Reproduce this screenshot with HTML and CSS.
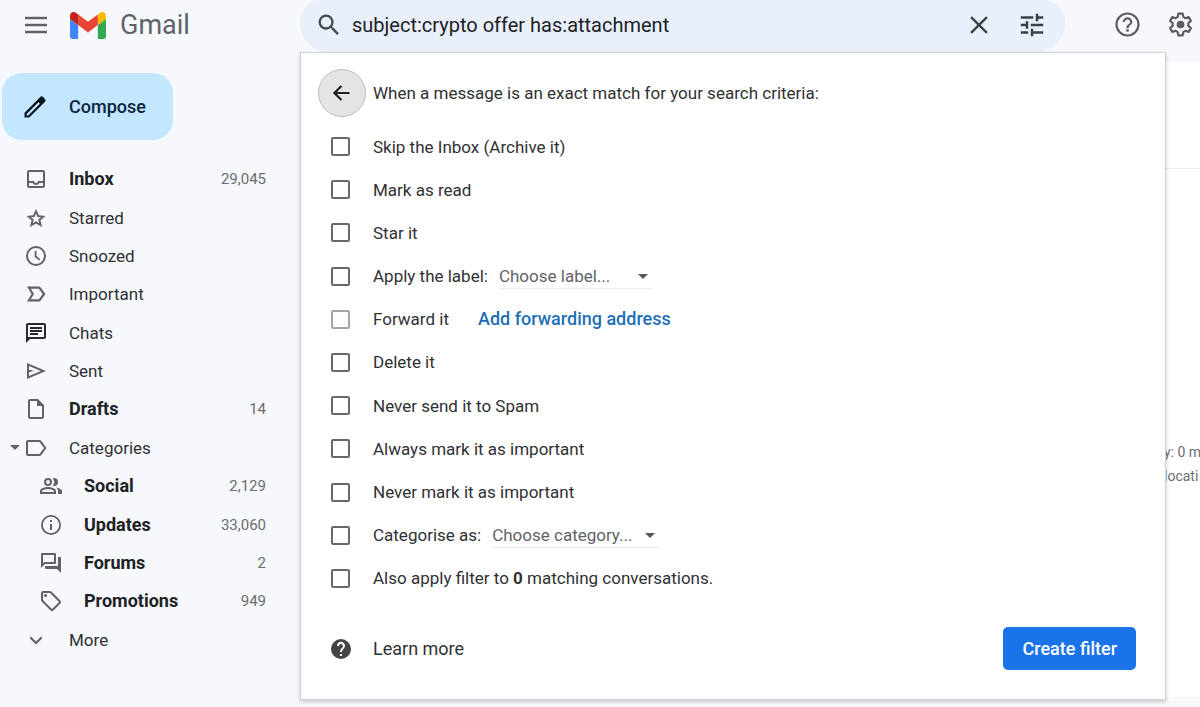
FILE: index.html
```html
<!DOCTYPE html>
<html lang="en-GB">
<head>
<meta charset="utf-8">
<meta name="viewport" content="width=device-width, initial-scale=1">
<title>Gmail</title>
<link rel="stylesheet" href="styles.css">
</head>
<body>
<div class="app">
  <aside class="sidebar">
    <div class="brand">
      <button class="icon-button menu-button" type="button" aria-label="Main menu">
        <svg width="24" height="24" viewBox="0 0 24 24" stroke="#5f6368" stroke-width="2.400"><path d="M1 5h22M1 12h22M1 19h22"/></svg>
      </button>
      <a class="logo" href="#">
        <svg width="36" height="27" viewBox="52 42 88 66" aria-hidden="true">
          <path fill="#4285f4" d="M58 108h14V74L52 59v43c0 3.320 2.690 6 6 6"/>
          <path fill="#34a853" d="M120 108h14c3.320 0 6-2.690 6-6V59l-20 15"/>
          <path fill="#fbbc04" d="M120 48v26l20-15v-8c0-7.420-8.470-11.650-14.400-7.200"/>
          <path fill="#ea4335" d="M72 74V48l24 18 24-18v26L96 92"/>
          <path fill="#c5221f" d="M52 51v8l20 15V48l-5.600-4.200c-5.940-4.450-14.400-.22-14.400 7.200"/>
        </svg>
        <span>Gmail</span>
      </a>
    </div>
    <button class="compose" type="button">
      <svg width="28" height="28" viewBox="0 0 24 24" fill="#0b1420"><path fill-rule="evenodd" d="M20.400 4.850l-1.250-1.250a2 2 0 0 0-2.850 0L3 16.900V21h4.100L20.400 7.700a2 2 0 0 0 0-2.850zM6.200 19.200H4.900v-1.300L14.900 7.900l1.300 1.300z"/></svg>
      <span>Compose</span>
    </button>
    <nav>
      <ul class="folders">
        <li><a class="folder unread" href="#">
          <svg class="glyph" viewBox="0 0 24 24"><path d="M19 3H5a2 2 0 0 0-2 2v14c0 1.100.9 2 2 2h14a2 2 0 0 0 2-2V5a2 2 0 0 0-2-2zm0 16H5v-3h3.560c.69 1.190 1.970 2 3.450 2s2.750-.81 3.450-2H19zm0-5h-4.990c0 1.100-.9 2-2 2s-2-.9-2-2H5V5h14z"/></svg>
          <span class="name">Inbox</span><span class="count">29,045</span></a></li>
        <li><a class="folder" href="#">
          <svg class="glyph" viewBox="0 0 24 24"><path fill-rule="evenodd" d="M21.500 9.900l-6.600-.6L12 3 9.100 9.300l-6.600.6 5 4.400L6 21l6-3.500 6 3.500-1.500-6.700zM12 15.300l-3.200 1.900.9-3.600-2.700-2.400 3.500-.3L12 7.600l1.500 3.300 3.500.3-2.700 2.400.9 3.600z"/></svg>
          <span class="name">Starred</span></a></li>
        <li><a class="folder" href="#">
          <svg class="glyph" viewBox="0 0 24 24"><path d="M12 2a10 10 0 1 0 0 20 10 10 0 0 0 0-20zm0 18a8 8 0 1 1 0-16 8 8 0 0 1 0 16zm.5-13H10.700v6l4.500 3.600 1.100-1.400-3.800-3.100z"/></svg>
          <span class="name">Snoozed</span></a></li>
        <li><a class="folder" href="#">
          <svg class="glyph" viewBox="0 0 24 24"><path d="M3 4.500L7.500 12 3 19.500h12a2 2 0 0 0 1.660-.89L21.500 12l-4.840-6.610A2 2 0 0 0 15 4.500zm3.800 2.200h8l3.900 5.300-3.900 5.300h-8l3.200-5.300z"/></svg>
          <span class="name">Important</span></a></li>
        <li><a class="folder" href="#">
          <svg class="glyph dark" viewBox="0 0 24 24"><path d="M4 2h16a2 2 0 0 1 2 2v12a2 2 0 0 1-2 2H6l-4 4V4c0-1.100.9-2 2-2zm0 2v12h16V4zm2 8h8v2H6zm0-3h12v2H6zm0-3h12v2H6z" fill-rule="evenodd"/></svg>
          <span class="name">Chats</span></a></li>
        <li><a class="folder" href="#">
          <svg class="glyph" viewBox="0 0 24 24"><path fill-rule="evenodd" d="M3 4l19 8-19 8zm2 3v3.750L10 12l-5 1.250V17l11.850-5z"/></svg>
          <span class="name">Sent</span></a></li>
        <li><a class="folder unread" href="#">
          <svg class="glyph" viewBox="0 0 24 24"><path fill-rule="evenodd" d="M14 2H6a2 2 0 0 0-2 2v16c0 1.100.9 2 2 2h12a2 2 0 0 0 2-2V8zM6 20V4h7v5h5v11z"/></svg>
          <span class="name">Drafts</span><span class="count">14</span></a></li>
        <li><a class="folder expandable" href="#">
          <svg class="twisty" viewBox="0 0 10 6"><path d="M0 0h10L5 5z"/></svg>
          <svg class="glyph" viewBox="0 0 24 24"><path fill-rule="evenodd" d="M4 4h11.500c.67 0 1.270.33 1.630.84L22.500 12l-5.370 7.160c-.36.51-.96.84-1.630.84H4a2 2 0 0 1-2-2V6c0-1.100.9-2 2-2zm0 2v12h11.500l4.500-6-4.500-6z"/></svg>
          <span class="name">Categories</span></a></li>
        <li><a class="folder child unread" href="#">
          <svg class="glyph" viewBox="0 0 24 24"><path fill-rule="evenodd" d="M9 4a4 4 0 1 0 0 8 4 4 0 0 0 0-8zm0 2a2 2 0 1 1 0 4 2 2 0 0 1 0-4zM9 13c-2.700 0-8 1.340-8 4v3h16v-3c0-2.660-5.300-4-8-4zm6 5H3v-1c0-.7 3.200-2 6-2s6 1.300 6 2zM15 12a4 4 0 0 0 0-8c-.5 0-.9.100-1.300.200a6 6 0 0 1 0 7.600c.4.130.8.200 1.300.200zM17 13.400c1.200.9 2 2 2 3.600v3h4v-3c0-2-3.500-3.200-6-3.600z"/></svg>
          <span class="name">Social</span><span class="count">2,129</span></a></li>
        <li><a class="folder child unread" href="#">
          <svg class="glyph" viewBox="0 0 24 24"><path fill-rule="evenodd" d="M11 7h2v2h-2zm0 4h2v6h-2zM12 2a10 10 0 1 0 0 20 10 10 0 0 0 0-20zm0 1.800a8.200 8.200 0 1 1 0 16.400 8.200 8.200 0 0 1 0-16.400z"/></svg>
          <span class="name">Updates</span><span class="count">33,060</span></a></li>
        <li><a class="folder child unread" href="#">
          <svg class="glyph" viewBox="0 0 24 24"><path fill-rule="evenodd" d="M15 4v7H5.170L4 12.170V4zm1-2H3a1 1 0 0 0-1 1v14l4-4h10a1 1 0 0 0 1-1V3a1 1 0 0 0-1-1zm5 4h-2v9H6v2a1 1 0 0 0 1 1h11l4 4V7a1 1 0 0 0-1-1z"/></svg>
          <span class="name">Forums</span><span class="count">2</span></a></li>
        <li><a class="folder child unread" href="#">
          <svg class="glyph" viewBox="0 0 24 24"><path fill-rule="evenodd" d="M21.400 11.600l-9-9A2 2 0 0 0 11 2H4a2 2 0 0 0-2 2v7c0 .550.220 1.050.590 1.420l9 9a2 2 0 0 0 2.820 0l7-7a2 2 0 0 0 0-2.820zM13 20L4 11V4h7l9 9zM6.500 5a1.500 1.500 0 1 0 0 3 1.500 1.500 0 0 0 0-3z"/></svg>
          <span class="name">Promotions</span><span class="count">949</span></a></li>
        <li><a class="folder" href="#">
          <svg class="glyph" viewBox="0 0 24 24"><path d="M7 8.500l5 5 5-5 1.500 1.500-6.500 6.500L5.500 10z"/></svg>
          <span class="name">More</span></a></li>
      </ul>
    </nav>
  </aside>

  <main class="main">
    <header class="topbar">
      <form class="search" role="search">
        <button class="icon-button" type="button" aria-label="Search">
          <svg width="28" height="28" viewBox="0 0 24 24" fill="#444a50"><path d="M15.500 14h-.79l-.28-.27A6.470 6.470 0 0 0 16 9.500 6.500 6.500 0 1 0 9.500 16c1.610 0 3.090-.59 4.230-1.570l.27.28v.79l5 4.990L20.490 19zm-6 0a4.500 4.500 0 1 1 0-9 4.500 4.500 0 0 1 0 9z"/></svg>
        </button>
        <input class="query" type="text" aria-label="Search mail" value="subject:crypto offer has:attachment">
        <button class="icon-button" type="button" aria-label="Clear search">
          <svg width="28" height="28" viewBox="0 0 24 24" stroke="#3c4043" stroke-width="2"><path d="M5.200 5.200l13.600 13.600M18.800 5.200L5.200 18.800"/></svg>
        </button>
        <button class="icon-button" type="button" aria-label="Search options">
          <svg width="30" height="30" viewBox="0 0 24 24" fill="#3c4043"><path d="M3 17v2h6v-2zM3 5v2h10V5zm10 16v-2h8v-2h-8v-2h-2v6zM7 9v2H3v2h4v2h2V9zm14 4v-2H11v2zm-6-4h2V7h4V5h-4V3h-2z"/></svg>
        </button>
      </form>
      <div class="actions">
        <button class="icon-button" type="button" aria-label="Support">
          <svg width="29" height="29" viewBox="0 0 24 24" fill="#5a5d61"><path d="M11 18h2v-2h-2zm1-16a10 10 0 1 0 0 20 10 10 0 0 0 0-20zm0 18.200a8.200 8.200 0 1 1 0-16.400 8.200 8.200 0 0 1 0 16.400zM12 6a4 4 0 0 0-4 4h1.900a2.100 2.100 0 1 1 4.200 0c0 2-3.050 1.750-3.050 5h1.900c0-2.250 3.050-2.500 3.050-5a4 4 0 0 0-4-4z"/></svg>
        </button>
        <button class="icon-button" type="button" aria-label="Settings">
          <svg width="29" height="29" viewBox="0 0 24 24" fill="none" stroke="#5a5d61" stroke-width="1.800" stroke-linejoin="round"><path d="M10.200 3h3.600l.5 2.700 1.900 1.100 2.600-.9 1.800 3.100-2.100 1.800v2.400l2.100 1.800-1.800 3.100-2.600-.9-1.900 1.100-.5 2.700h-3.600l-.5-2.700-1.900-1.100-2.600.9L3.400 15l2.100-1.800v-2.400L3.400 9l1.800-3.100 2.600.9 1.900-1.100z"/><circle cx="12" cy="12" r="3.200" fill="#5a5d61" stroke="none"/></svg>
        </button>
      </div>
    </header>

    <section class="mailbox" aria-label="Messages">
      <div class="mailbox-toolbar"></div>
      <div class="activity"><p>y: 0 m</p><p>locati</p></div>
    </section>

    <form class="filter-panel">
      <div class="panel-head">
        <button class="back" type="button" aria-label="Back">
          <svg width="26" height="26" viewBox="0 0 24 24" fill="none" stroke="#202124" stroke-width="2"><path d="M19 12H5.500M11.500 5.500L5 12l6.500 6.500"/></svg>
        </button>
        <h2>When a message is an exact match for your search criteria:</h2>
      </div>
      <div class="options">
        <div class="option"><input type="checkbox" id="skip"><label for="skip">Skip the Inbox (Archive it)</label></div>
        <div class="option"><input type="checkbox" id="read"><label for="read">Mark as read</label></div>
        <div class="option"><input type="checkbox" id="star"><label for="star">Star it</label></div>
        <div class="option"><input type="checkbox" id="label"><label for="label">Apply the label:</label>
          <span class="picker picker-label"><select aria-label="Label"><option>Choose label...</option></select><svg class="arrow" viewBox="0 0 10 5"><path d="M0 0h10L5 5z"/></svg></span></div>
        <div class="option"><input type="checkbox" id="forward" disabled><label for="forward">Forward it</label><a class="forwarding" href="#">Add forwarding address</a></div>
        <div class="option"><input type="checkbox" id="delete"><label for="delete">Delete it</label></div>
        <div class="option"><input type="checkbox" id="spam"><label for="spam">Never send it to Spam</label></div>
        <div class="option"><input type="checkbox" id="always"><label for="always">Always mark it as important</label></div>
        <div class="option"><input type="checkbox" id="never"><label for="never">Never mark it as important</label></div>
        <div class="option"><input type="checkbox" id="category"><label for="category">Categorise as:</label>
          <span class="picker picker-category"><select aria-label="Category"><option>Choose category...</option></select><svg class="arrow" viewBox="0 0 10 5"><path d="M0 0h10L5 5z"/></svg></span></div>
        <div class="option"><input type="checkbox" id="also"><label for="also">Also apply filter to <b>0</b> matching conversations.</label></div>
      </div>
      <div class="panel-foot">
        <a class="learn" href="#">
          <svg width="24" height="24" viewBox="0 0 24 24" fill="#444"><path d="M12 2a10 10 0 1 0 0 20 10 10 0 0 0 0-20zm1 17h-2v-2h2zm2.070-7.750l-.9.920C13.450 12.900 13 13.500 13 15h-2v-.5c0-1.100.45-2.100 1.170-2.830l1.240-1.260A2 2 0 1 0 10 9H8a4 4 0 1 1 7.070 2.250z"/></svg>
          <span>Learn more</span>
        </a>
        <button class="create" type="button">Create filter</button>
      </div>
    </form>
  </main>
</div>
</body>
</html>
```
FILE: styles.css
```css
* { box-sizing: border-box; }

body {
  margin: 0;
  background: #f6f8fc;
  color: #303134;
  font-family: Roboto, "Liberation Sans", sans-serif;
  font-size: 17px;
  line-height: 24px;
}

button, input, select { font: inherit; color: inherit; }
button { cursor: pointer; }
a { color: inherit; text-decoration: none; }
svg { flex: none; display: block; }

.app {
  display: grid;
  grid-template-columns: 300px minmax(0, 1fr);
  min-height: 100vh;
}

.icon-button {
  display: flex;
  align-items: center;
  justify-content: center;
  padding: 0;
  border: 0;
  background: none;
}

/* Sidebar */
.brand {
  display: flex;
  align-items: center;
  gap: 22px;
  height: 50px;
  padding-left: 24px;
}
.logo {
  display: flex;
  align-items: center;
  gap: 14px;
  color: #5f6368;
  font-size: 27px;
}
.compose {
  display: flex;
  align-items: center;
  gap: 20px;
  height: 67px;
  margin: 23px 0 0 2px;
  padding: 0 27px 0 19px;
  border: 0;
  border-radius: 20px;
  background: #c2e7ff;
  color: #0b2440;
  font-size: 18px;
  font-weight: 500;
}
.folders {
  display: grid;
  grid-auto-rows: 1fr;
  min-height: 499px;
  margin: 20px 0 0;
  padding: 0;
  list-style: none;
}
.folder {
  display: flex;
  align-items: center;
  height: 100%;
  padding: 0 34px 0 24px;
}
.folder.child { padding-left: 39px; }
.folder.expandable { padding-left: 10px; }
.glyph {
  width: 24px;
  height: 24px;
  margin-right: 21px;
  fill: #5f6368;
}
.glyph.dark { fill: #27292c; }
.twisty {
  width: 10px;
  height: 6px;
  margin-right: 4px;
  fill: #5f6368;
}
.name { flex: 1; }
.unread .name { font-size: 18px; font-weight: 700; color: #202124; }
.count { font-size: 15px; color: #6a6d71; }

/* Top bar */
.main {
  position: relative;
  display: flex;
  flex-direction: column;
}
.topbar {
  display: grid;
  grid-template-columns: minmax(0, 1fr) 135px;
  align-items: start;
  height: 62px;
}
.search {
  display: flex;
  align-items: center;
  height: 52px;
  padding: 0 18px 3px 15px;
  border-radius: 22px 22px 28px 28px;
  background: #e9f0fb;
}
.query {
  flex: 1;
  min-width: 0;
  padding: 0;
  margin-left: 9px;
  border: 0;
  outline: 0;
  background: none;
  color: #202124;
  font-size: 20px;
}
.search .query + .icon-button { margin-right: 24px; }
.actions {
  display: flex;
  gap: 24px;
  height: 49px;
  padding-left: 48px;
}

/* Message area */
.mailbox {
  flex: 1;
  margin-bottom: 10px;
  background: #fff;
}
.mailbox-toolbar {
  height: 107px;
  border-bottom: 1px solid #eceff1;
}
.activity {
  width: 36px;
  margin: 271px 0 0 auto;
  color: #6a6d71;
  font-size: 14px;
  white-space: nowrap;
}
.activity p { margin: 0; }

/* Filter panel */
.filter-panel {
  position: absolute;
  top: 52px;
  left: 0;
  right: 34px;
  padding: 16px 29px 29px 17px;
  border: 1px solid #cfd1d4;
  background: #fff;
  box-shadow: 0 2px 4px rgba(0, 0, 0, .2);
}
.panel-head {
  display: flex;
  align-items: center;
  gap: 7px;
}
.panel-head h2 {
  margin: 0;
  font-size: inherit;
  font-weight: 400;
}
.back {
  display: flex;
  align-items: center;
  justify-content: center;
  width: 48px;
  height: 48px;
  padding: 0;
  border: 1px solid #bdbdbd;
  border-radius: 50%;
  background: #e4e4e4;
}
.options {
  display: grid;
  grid-auto-rows: 1fr;
  min-height: 475px;
  margin-top: 8px;
}
.option {
  display: flex;
  align-items: center;
  padding-left: 13px;
}
.option input {
  appearance: none;
  width: 19px;
  height: 19px;
  margin: 0 23px 0 0;
  border: 2px solid #66686b;
  border-radius: 2px;
}
.option input:disabled { border-color: #a5a6a8; }
.picker {
  position: relative;
  margin-left: 11px;
  border-bottom: 1px solid #ebebeb;
}
.picker select {
  display: block;
  width: 100%;
  padding: 0;
  border: 0;
  appearance: none;
  background: none;
  color: #5f6368;
}
.picker-label { width: 153px; }
.picker-category { width: 167px; }
.arrow {
  position: absolute;
  top: 10px;
  right: 4px;
  width: 10px;
  height: 5px;
  fill: #55575a;
  pointer-events: none;
}
.forwarding {
  margin-left: 29px;
  color: #1f6fb8;
  font-size: 18px;
  font-weight: 500;
}
.panel-foot {
  display: flex;
  align-items: center;
  justify-content: space-between;
  margin-top: 27px;
  padding-left: 11px;
  font-size: 18px;
}
.learn {
  display: flex;
  align-items: center;
  gap: 20px;
}
.create {
  height: 43px;
  padding: 0 19px;
  border: 0;
  border-radius: 5px;
  background: #1a73e8;
  color: #fff;
  font-weight: 500;
}
```
